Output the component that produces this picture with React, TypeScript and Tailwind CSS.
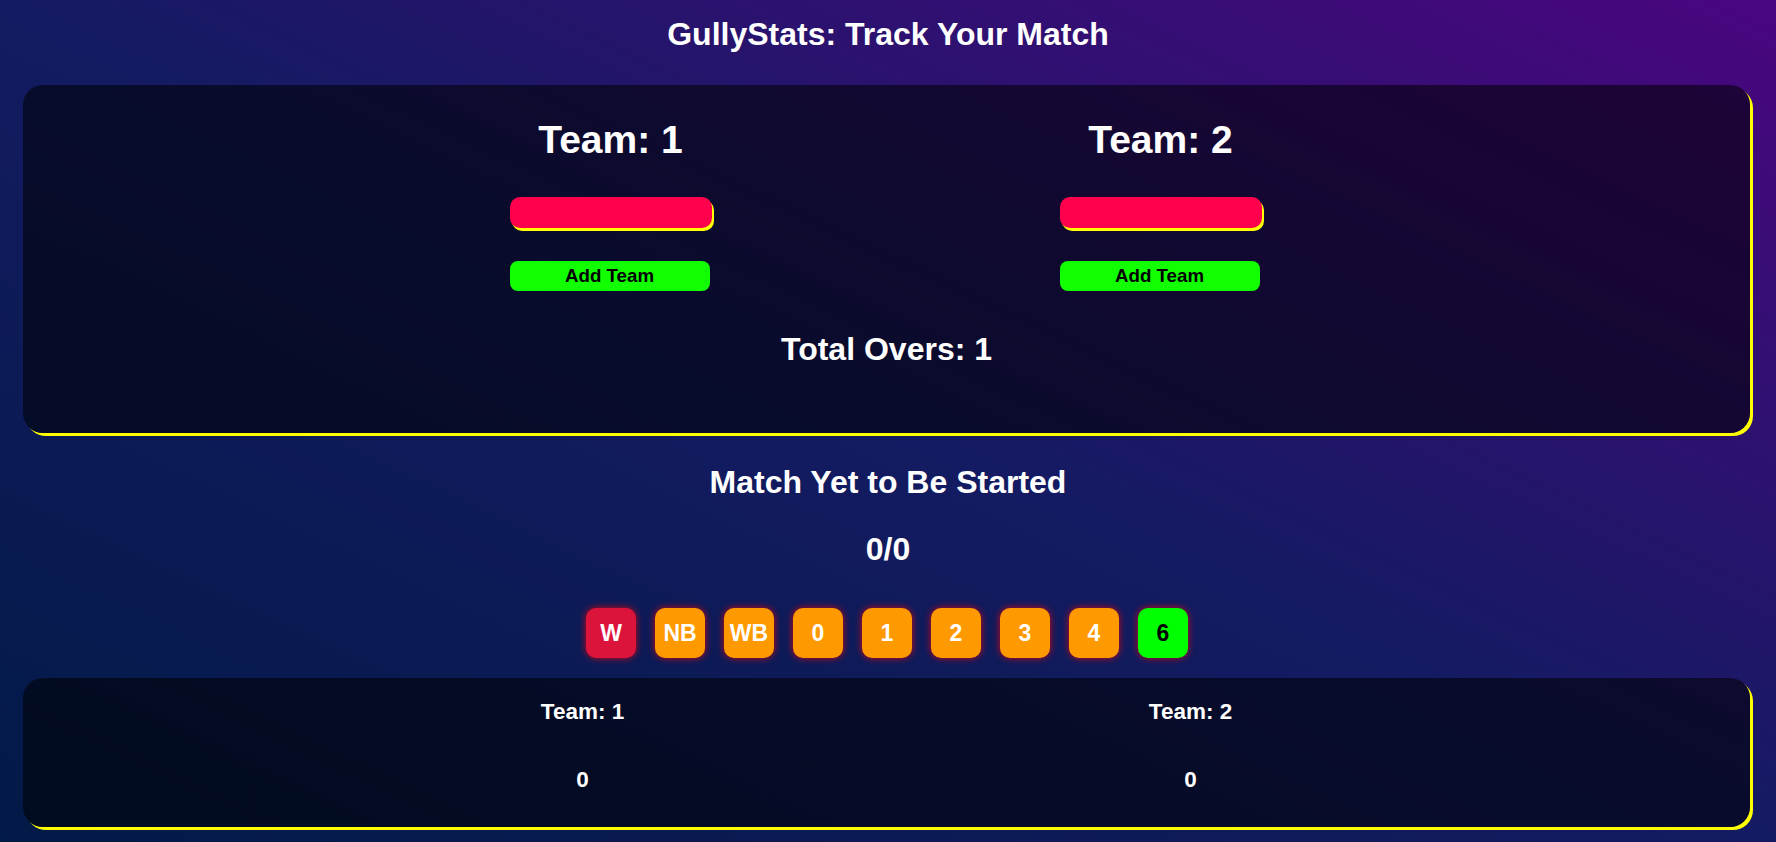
import React from "react";

const balls: { label: string; cls: string }[] = [
  { label: "W", cls: "bg-[#dc143c] text-white" },
  { label: "NB", cls: "bg-[#ff9900] text-white" },
  { label: "WB", cls: "bg-[#ff9900] text-white" },
  { label: "0", cls: "bg-[#ff9900] text-white" },
  { label: "1", cls: "bg-[#ff9900] text-white" },
  { label: "2", cls: "bg-[#ff9900] text-white" },
  { label: "3", cls: "bg-[#ff9900] text-white" },
  { label: "4", cls: "bg-[#ff9900] text-white" },
  { label: "6", cls: "bg-[#00ff00] text-black" },
];

function TeamInput({ name }: { name: string }) {
  return (
    <div className="flex w-[250px] flex-col items-center">
      <h2 className="text-[39px] font-bold leading-[46px]">{name}</h2>
      <input
        type="text"
        className="mt-[34px] h-[31px] w-[202px] rounded-[10px] bg-[#ff004d] shadow-[2px_3px_0_#ffff00] outline-none"
      />
      <button className="mt-[33px] mr-[2px] h-[30px] w-[200px] rounded-[8px] bg-[#11ff00] text-[18.72px] font-bold leading-none text-black">
        Add Team
      </button>
    </div>
  );
}

export default function App() {
  return (
    <div className="min-h-screen w-full bg-[linear-gradient(to_top_right,#021a47_0%,#141b62_50%,#4a0680_100%)] pt-4 pb-2 font-['Liberation_Sans',Arial,sans-serif] text-white">
      <h1 className="text-center text-[32px] font-bold leading-[37px]">
        GullyStats: Track Your Match
      </h1>

      <section className="mt-8 ml-[23px] mr-[26px] flex flex-col items-center rounded-[20px] bg-black/55 pt-8 pb-[65px] shadow-[3px_3px_0_#ffff00]">
        <div className="flex justify-center gap-[300px] pr-[2px]">
          <TeamInput name="Team: 1" />
          <TeamInput name="Team: 2" />
        </div>
        <h2 className="mt-[40px] text-[32px] font-bold leading-[37px]">
          Total Overs: 1
        </h2>
      </section>

      <h2 className="mt-[31px] text-center text-[32px] font-bold leading-[37px]">
        Match Yet to Be Started
      </h2>
      <h2 className="mt-[30px] text-center text-[32px] font-bold leading-[37px]">
        0/0
      </h2>

      <div className="mt-[40px] flex justify-center gap-[19px] pr-[2px]">
        {balls.map((b) => (
          <button
            key={b.label}
            className={`flex h-[50px] w-[50px] items-center justify-center rounded-[10px] text-[23px] font-bold leading-none shadow-[0_0_7px_rgba(255,0,0,0.8)] ${b.cls}`}
          >
            {b.label}
          </button>
        ))}
      </div>

      <section className="mt-[20px] ml-[23px] mr-[26px] rounded-[20px] bg-black/55 pt-[21px] pb-[34px] shadow-[3px_3px_0_#ffff00]">
        <div className="flex justify-center gap-[308px]">
          {["Team: 1", "Team: 2"].map((t) => (
            <div key={t} className="flex w-[300px] flex-col items-center">
              <h3 className="text-[22.5px] font-bold leading-[26px]">{t}</h3>
              <p className="mt-[42px] text-[22.5px] font-bold leading-[26px]">0</p>
            </div>
          ))}
        </div>
      </section>
    </div>
  );
}
